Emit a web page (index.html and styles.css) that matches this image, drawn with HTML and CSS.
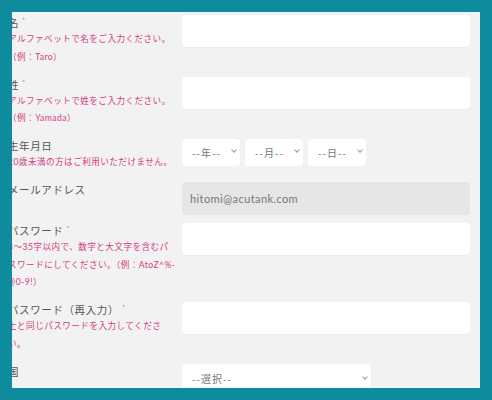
FILE: index.html
```html
<!DOCTYPE html>
<html lang="ja">
<head>
    <meta charset="UTF-8">
    <meta name="viewport" content="width=device-width, initial-scale=1.0">
    <title>会員登録</title>
    <link rel="stylesheet" href="styles.css">
</head>
<body>

<div class="frame">
    <div class="panel">
        <form class="form">
            <div class="field">
                <div class="field-label">
                    <label>名<span class="req">*</span></label>
                    <p class="help">アルファベットで名をご入力ください。<br>（例：Taro）</p>
                </div>
                <input type="text" class="input">
            </div>

            <div class="field">
                <div class="field-label">
                    <label>姓<span class="req">*</span></label>
                    <p class="help">アルファベットで姓をご入力ください。<br>（例：Yamada）</p>
                </div>
                <input type="text" class="input">
            </div>

            <div class="field">
                <div class="field-label">
                    <label>生年月日</label>
                    <p class="help">20歳未満の方はご利用いただけません。</p>
                </div>
                <div class="birth">
                    <span class="select select-sm"><select><option>--年--</option></select></span>
                    <span class="select select-sm"><select><option>--月--</option></select></span>
                    <span class="select select-sm"><select><option>--日--</option></select></span>
                </div>
            </div>

            <div class="field">
                <div class="field-label">
                    <label>メールアドレス</label>
                </div>
                <input type="text" class="input input-readonly" value="hitomi@acutank.com" readonly>
            </div>

            <div class="field">
                <div class="field-label">
                    <label>パスワード<span class="req">*</span></label>
                    <p class="help">8〜35字以内で、数字と大文字を含むパ<br>スワードにしてください。（例：AtoZ^%-<br>@0-9!）</p>
                </div>
                <input type="password" class="input">
            </div>

            <div class="field">
                <div class="field-label">
                    <label>パスワード（再入力）<span class="req">*</span></label>
                    <p class="help">上と同じパスワードを入力してくださ<br>い。</p>
                </div>
                <input type="password" class="input">
            </div>

            <div class="field">
                <div class="field-label">
                    <label>国</label>
                </div>
                <span class="select select-country"><select><option>--選択--</option></select></span>
            </div>
        </form>
    </div>
</div>

</body>
</html>
```

FILE: styles.css
```css
body {
    margin: 0;
    background-color: #0e8b9c;
    font-family: "Noto Sans CJK JP", "Noto Sans", sans-serif;
}
.frame {
    padding: 12px;
}
.panel {
    background-color: #f2f2f2;
    width: 468px;
    height: 376px;
    overflow: hidden;
}
.form {
    margin-left: -4px;
    padding: 3px 10px 0 0;
    display: flex;
    flex-direction: column;
    gap: 8px;
}
.field {
    display: grid;
    grid-template-columns: 166px 1fr;
    column-gap: 8px;
    align-items: start;
}
.field-label label {
    display: block;
    font-size: 10.5px;
    line-height: 16px;
    letter-spacing: 0.6px;
    color: #555;
    white-space: nowrap;
}
.req {
    color: #d6829f;
    font-size: 7px;
    vertical-align: top;
    line-height: 10px;
    margin-left: 3px;
}
.help {
    margin: 0 0 2.5px;
    font-family: Lato, "Noto Sans CJK JP", sans-serif;
    font-size: 8.6px;
    line-height: 17.5px;
    letter-spacing: 0.45px;
    color: #d23c83;
    white-space: nowrap;
}
.input {
    box-sizing: border-box;
    width: 100%;
    height: 32px;
    border: none;
    border-radius: 4px;
    background-color: #fff;
    box-shadow: 0 1px 1px rgba(0, 0, 0, 0.03);
    padding: 0 8px;
    font-family: Lato, "Noto Sans", sans-serif;
    font-size: 11px;
    letter-spacing: 0.4px;
    color: #777;
    outline: none;
}
.input-readonly {
    height: 33px;
    background-color: #e6e6e6;
    box-shadow: none;
}
.birth {
    display: flex;
    gap: 5px;
}
.select {
    position: relative;
    display: block;
}
.select select {
    appearance: none;
    box-sizing: border-box;
    width: 100%;
    border: none;
    border-radius: 4px;
    background-color: #fff;
    padding: 0 0 0 10px;
    font-family: "Noto Sans CJK JP", sans-serif;
    font-size: 10px;
    letter-spacing: 1px;
    color: #777;
    outline: none;
}
.select::after {
    content: "";
    position: absolute;
    width: 3px;
    height: 3px;
    border-right: 1px solid #999;
    border-bottom: 1px solid #999;
    transform: rotate(45deg);
    pointer-events: none;
}
.select-sm {
    width: 58px;
}
.select-sm select {
    height: 27px;
}
.select-sm::after {
    right: 4px;
    top: 10px;
}
.select-country {
    width: 189px;
}
.select-country select {
    height: 30px;
}
.select-country::after {
    right: 4px;
    top: 11px;
}
```
